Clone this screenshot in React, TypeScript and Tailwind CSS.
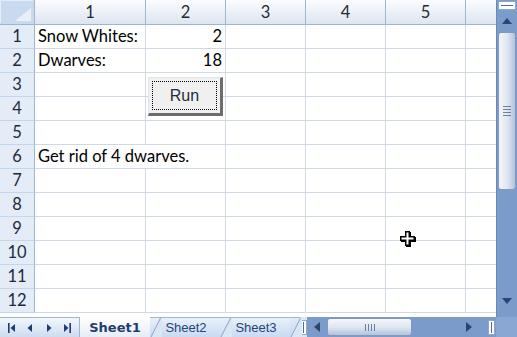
import React from 'react';

const rowNums = [1, 2, 3, 4, 5, 6, 7, 8, 9, 10, 11, 12];

function Cell({ children, right, span, last }: { children?: React.ReactNode; right?: boolean; span?: boolean; last?: boolean }) {
  return (
    <div
      className={`h-[24px] border-b border-[#d0d7e5] flex items-center whitespace-nowrap overflow-visible text-black ${last ? '' : 'border-r'} ${right ? 'justify-end pr-[3px]' : 'pl-[3px]'} ${span ? 'col-span-2' : ''}`}
    >
      {children}
    </div>
  );
}

function Row({ n }: { n: number }) {
  const c1 = n === 1 ? 'Snow Whites:' : n === 2 ? 'Dwarves:' : n === 6 ? 'Get rid of 4 dwarves.' : '';
  const c2 = n === 1 ? '2' : n === 2 ? '18' : '';
  return (
    <>
      <div className="h-[24px] bg-[#e4ecf7] border-r border-b border-r-[#9eb6ce] border-b-[#c5d5ea] flex items-center justify-center text-[#1e2a3a]">
        {n}
      </div>
      {n === 6 ? (
        <Cell span>{c1}</Cell>
      ) : (
        <>
          <Cell>{c1}</Cell>
          <Cell right>{c2}</Cell>
        </>
      )}
      <Cell />
      <Cell />
      <Cell />
      <Cell last />
    </>
  );
}

function ColHead({ label, last }: { label?: string; last?: boolean }) {
  return (
    <div
      className={`h-[25px] bg-gradient-to-b from-[#fbfcfe] to-[#dde5f1] border-b border-[#9eb6ce] flex items-center justify-center text-[#1e2a3a] ${last ? '' : 'border-r'}`}
    >
      {label}
    </div>
  );
}

function Tri({ dir }: { dir: 'up' | 'down' | 'left' | 'right' }) {
  const pts =
    dir === 'up' ? '0,6 5,0 10,6' : dir === 'down' ? '0,0 10,0 5,6' : dir === 'left' ? '6,0 6,10 0,5' : '0,0 0,10 6,5';
  const w = dir === 'up' || dir === 'down' ? 10 : 6;
  const h = dir === 'up' || dir === 'down' ? 6 : 10;
  return (
    <svg width={w} height={h} viewBox={`0 0 ${w} ${h}`}>
      <polygon points={pts} fill="#2b4570" />
    </svg>
  );
}

function NavArrow({ kind }: { kind: 'first' | 'prev' | 'next' | 'last' }) {
  return (
    <svg width="8" height="10" viewBox="0 0 8 10">
      {kind === 'first' && (
        <>
          <rect x="0" y="0" width="1.6" height="10" fill="#1f3d6e" />
          <polygon points="7,1 7,9 2.5,5" fill="#1f3d6e" />
        </>
      )}
      {kind === 'prev' && <polygon points="6,1 6,9 1.5,5" fill="#1f3d6e" />}
      {kind === 'next' && <polygon points="2,1 2,9 6.5,5" fill="#1f3d6e" />}
      {kind === 'last' && (
        <>
          <polygon points="1,1 1,9 5.5,5" fill="#1f3d6e" />
          <rect x="6.4" y="0" width="1.6" height="10" fill="#1f3d6e" />
        </>
      )}
    </svg>
  );
}

function Slant() {
  return (
    <svg className="absolute left-0 top-0" width="12" height="20" viewBox="0 0 12 20">
      <polygon points="0,20 10,0 12,0 12,20" fill="#dbe6f5" />
      <line x1="0.5" y1="20" x2="10.5" y2="0" stroke="#8aa3c8" strokeWidth="1" />
    </svg>
  );
}

function Tab({ label }: { label: string }) {
  return (
    <div className="relative w-[70px] h-[20px] bg-gradient-to-b from-[#e9f0fa] to-[#c9daf1] border-t border-[#9eb6ce] flex items-center justify-center pl-[2px] text-[13px] text-[#24457a] font-['Liberation_Sans',sans-serif]">
      <Slant />
      <span className="relative">{label}</span>
    </div>
  );
}

function SplitBoxV() {
  return (
    <div className="w-[7px] h-[15px] bg-white border border-[#8ea7cd] flex items-center justify-center">
      <div className="w-[1px] h-[11px] bg-[#4c6a99]" />
    </div>
  );
}

export default function App() {
  return (
    <div className="w-[517px] h-[337px] overflow-hidden bg-white relative font-['Lato',sans-serif] text-[16.5px] select-none">
      <div className="flex h-[317px]">
        <div className="w-[496px] h-[317px] relative">
          <div className="grid grid-cols-[35px_111px_80px_80px_80px_80px_30px]">
            <div className="h-[25px] bg-[#c9daf0] border-r border-b border-[#9eb6ce] relative">
              <svg className="absolute left-0 top-0" width="34" height="24" viewBox="0 0 34 24">
                <polyline points="0.5,23 0.5,0.5 33,0.5" fill="none" stroke="#e6eef9" />
                <polygon points="31,8 31,21 15,21" fill="#e9eff8" />
              </svg>
            </div>
            <ColHead label="1" />
            <ColHead label="2" />
            <ColHead label="3" />
            <ColHead label="4" />
            <ColHead label="5" />
            <ColHead last />
            {rowNums.map((n) => (
              <Row key={n} n={n} />
            ))}
          </div>

          {/* Run button */}
          <div className="absolute left-[148px] top-[77px] w-[75px] h-[39px] bg-[#f0f0f0] border-t border-l border-[#e3e3e3] border-r-[3px] border-b-[3px] border-r-[#6d6d6d] border-b-[#6d6d6d] p-[3px] font-['Liberation_Sans',sans-serif] text-[16px] text-[#1f2d3d]">
            <div className="w-full h-full border border-dotted border-black flex items-center justify-center pt-[1px]">Run</div>
          </div>

          {/* cell cursor */}
          <svg className="absolute left-[400px] top-[230px]" width="18" height="18" viewBox="0 0 18 18">
            <polygon points="6,2 11,2 11,7 16,7 16,12 11,12 11,17 6,17 6,12 1,12 1,7 6,7" fill="#000" />
            <polygon points="5,1 10,1 10,6 15,6 15,11 10,11 10,16 5,16 5,11 0,11 0,6 5,6" fill="#000" />
            <polygon points="6.5,2.5 8.5,2.5 8.5,7.5 13.5,7.5 13.5,9.5 8.5,9.5 8.5,14.5 6.5,14.5 6.5,9.5 1.5,9.5 1.5,7.5 6.5,7.5" fill="#fff" />
          </svg>
        </div>

        {/* vertical scrollbar */}
        <div className="w-[21px] h-[317px] bg-[#7b9bcb] border-l border-[#6a89b9] flex flex-col items-center">
          <div className="mt-[1px] w-[18px] h-[9px] bg-white border border-[#8ea7cd] flex items-center justify-center">
            <div className="w-[12px] h-[1px] bg-[#4c6a99]" />
          </div>
          <div className="h-[22px] flex items-center justify-center">
            <Tri dir="up" />
          </div>
          <div className="w-[18px] h-[158px] rounded-[3px] border border-[#8199c0] bg-gradient-to-r from-[#f4f6fa] via-[#e0e7f1] to-[#b4c4db] flex flex-col items-center justify-center gap-[2px]">
            <div className="w-[8px] h-[1px] bg-[#6c7f9c]" />
            <div className="w-[8px] h-[1px] bg-[#6c7f9c]" />
            <div className="w-[8px] h-[1px] bg-[#6c7f9c]" />
            <div className="w-[8px] h-[1px] bg-[#6c7f9c]" />
          </div>
          <div className="flex-1" />
          <div className="h-[20px] flex items-center justify-center mb-[6px]">
            <Tri dir="down" />
          </div>
        </div>
      </div>

      {/* bottom bar */}
      <div className="flex h-[20px] bg-gradient-to-b from-[#e3ecf8] to-[#c8d9f0]">
        <div className="w-[80px] h-[20px] border-t border-r border-[#9eb6ce] bg-gradient-to-b from-[#f3f7fc] to-[#cddcf1] flex items-center justify-around px-[3px]">
          <NavArrow kind="first" />
          <NavArrow kind="prev" />
          <NavArrow kind="next" />
          <NavArrow kind="last" />
        </div>
        <div className="w-[70px] h-[20px] bg-gradient-to-b from-[#ffffff] to-[#e6edf8] flex items-center justify-center pt-[1px] text-[13px] font-bold text-[#1f3d6e] font-['DejaVu_Sans',sans-serif]">
          Sheet1
        </div>
        <Tab label="Sheet2" />
        <Tab label="Sheet3" />
        <div className="relative w-[10px] h-[20px] border-t border-[#9eb6ce]">
          <Slant />
        </div>
        <div className="w-[7px] h-[20px] flex items-center justify-center bg-[#dbe6f5]">
          <SplitBoxV />
        </div>
        <div className="w-[189px] h-[20px] bg-[#7b9bcb] flex items-center">
          <div className="w-[20px] flex justify-center">
            <Tri dir="left" />
          </div>
          <div className="w-[85px] h-[18px] rounded-[3px] border border-[#8199c0] bg-gradient-to-b from-[#f4f6fa] via-[#e0e7f1] to-[#b4c4db] flex items-center justify-center gap-[2px]">
            <div className="w-[1px] h-[7px] bg-[#6c7f9c]" />
            <div className="w-[1px] h-[7px] bg-[#6c7f9c]" />
            <div className="w-[1px] h-[7px] bg-[#6c7f9c]" />
            <div className="w-[1px] h-[7px] bg-[#6c7f9c]" />
          </div>
          <div className="flex-1 flex justify-end pr-[16px]">
            <Tri dir="right" />
          </div>
          <div className="mr-[1px]">
            <SplitBoxV />
          </div>
        </div>
        <div className="w-[21px] h-[20px] bg-[#8aa7d4]" />
      </div>
    </div>
  );
}
